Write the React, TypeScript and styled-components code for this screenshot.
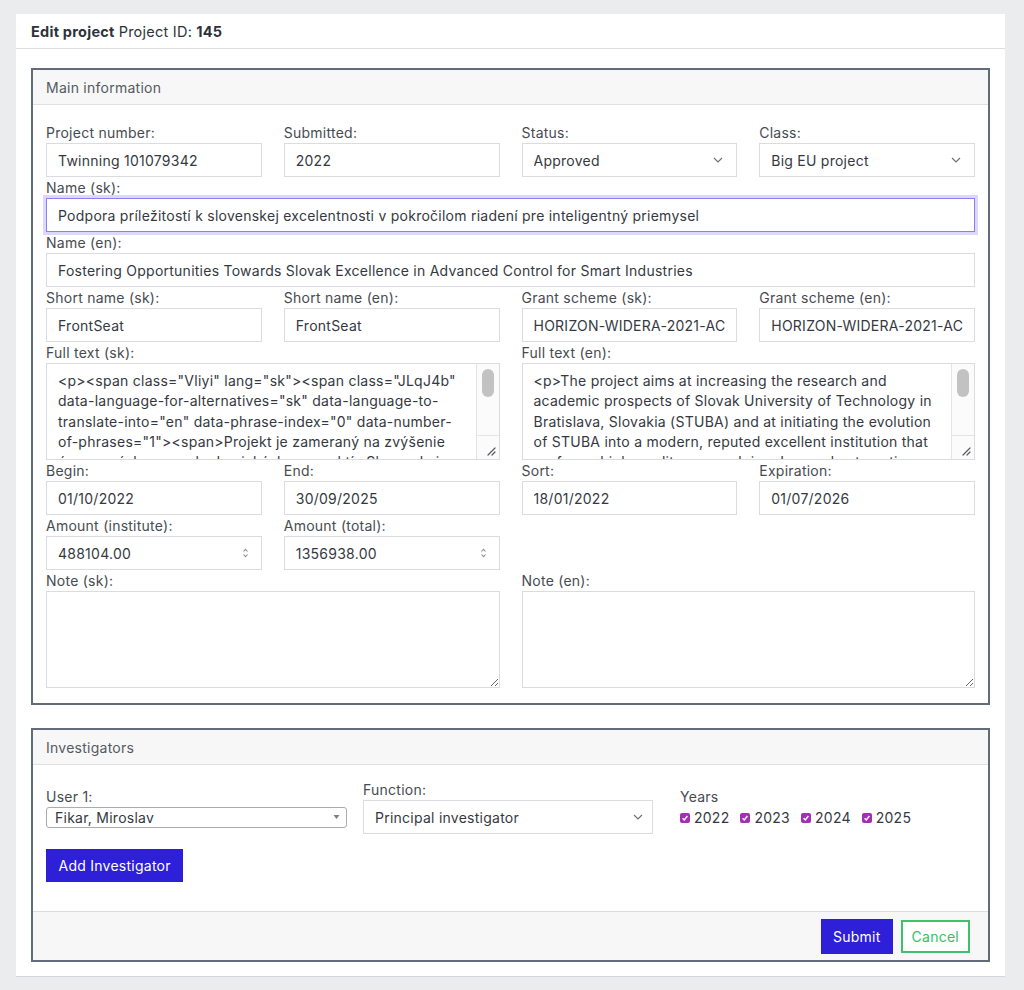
import React from "react";
import styled, { createGlobalStyle } from "styled-components";

const GlobalStyle = createGlobalStyle`
  * { box-sizing: border-box; }
  html, body {
    margin: 0;
    padding: 0;
    background: #ebecee;
    font-family: "Inter", "Liberation Sans", sans-serif;
    font-size: 14px;
    letter-spacing: 0.25px;
    color: #3b3f45;
  }
  input, select, textarea, button { letter-spacing: 0.25px; }
`;

const Page = styled.div`
  padding: 14px 19px 14px 16px;
  min-height: 990px;
`;

const Card = styled.div`
  background: #fff;
  border-bottom: 1px solid #d3d6db;
`;

const CardHeader = styled.div`
  height: 35px;
  display: flex;
  align-items: center;
  gap: 4px;
  padding: 0 15px;
  border-bottom: 1px solid #dcdee2;
  color: #2d333a;
  font-size: 14.5px;
  letter-spacing: 0.25px;
  b { font-weight: 700; }
`;

const CardBody = styled.div`
  padding: 19px 15px 14px 15px;
  display: flex;
  flex-direction: column;
  gap: 23px;
`;

const Panel = styled.section`
  border: 2px solid #626b7a;
  background: #fff;
`;

const PanelHeader = styled.div`
  height: 35px;
  display: flex;
  align-items: center;
  padding: 0 13px;
  background: #f7f7f7;
  border-bottom: 1px solid #dfe0e3;
  color: #555a61;
  font-size: 14px;
`;

const FormGrid = styled.div`
  display: grid;
  grid-template-columns: repeat(4, 1fr);
  column-gap: 22px;
  padding: 17px 13px 15px 13px;
`;

const Field = styled.div<{ $span?: number; $start?: number }>`
  display: flex;
  flex-direction: column;
  min-width: 0;
  grid-column: ${(p) => (p.$start ? `${p.$start} / ` : "")}span ${(p) => p.$span ?? 1};
`;

const Label = styled.label`
  display: block;
  line-height: 21px;
  height: 21px;
  color: #474b51;
  font-size: 14px;
`;

const Input = styled.input<{ $focused?: boolean }>`
  width: 100%;
  height: 34px;
  padding: 0 11px;
  border: 1px solid ${(p) => (p.$focused ? "#8c7ff0" : "#dadce2")};
  box-shadow: ${(p) => (p.$focused ? "0 0 0 3px #dcd7fb" : "none")};
  font-family: inherit;
  font-size: 14px;
  color: #35393f;
  background: #fff;
  outline: none;
`;

const InputWrap = styled.div`
  position: relative;
`;

const SelectBox = styled.select`
  width: 100%;
  height: 34px;
  padding: 0 30px 0 11px;
  border: 1px solid #dadce2;
  appearance: none;
  background: #fff;
  font-family: inherit;
  font-size: 14px;
  color: #35393f;
  outline: none;
`;

const Overlay = styled.span<{ $right: number }>`
  position: absolute;
  right: ${(p) => p.$right}px;
  top: 50%;
  transform: translateY(-50%);
  display: flex;
  pointer-events: none;
`;

const TextArea = styled.textarea<{ $scroll?: boolean }>`
  display: block;
  width: 100%;
  height: 97px;
  padding: 7px ${(p) => (p.$scroll ? "34px" : "11px")} 7px 11px;
  border: 1px solid #dadce2;
  font-family: inherit;
  font-size: 14px;
  line-height: 20.3px;
  color: #35393f;
  outline: none;
  resize: both;
  overflow: hidden;
`;

/* fake classic scrollbar drawn over the right edge of a scrolled textarea */
const ScrollBar = styled.div`
  position: absolute;
  top: 1px;
  right: 1px;
  bottom: 1px;
  width: 23px;
  display: flex;
  flex-direction: column;
  background: #fcfbfc;
  border-left: 1px solid #e4e4e6;
  pointer-events: none;
`;

const Track = styled.div`
  flex: 1;
  padding: 5px 5px 0 5px;
`;

const Thumb = styled.div`
  height: 28px;
  border-radius: 6px;
  background: #c2c2c2;
`;

const Corner = styled.div`
  height: 24px;
  border-top: 1px solid #e4e4e6;
  display: flex;
  align-items: flex-end;
  justify-content: flex-end;
  padding: 0 3px 3px 0;
`;

const InvBody = styled.div`
  padding: 14px 13px 29px 13px;
`;

const InvRow = styled.div`
  display: flex;
  align-items: center;
  margin-bottom: 15px;
`;

const InvField = styled.div<{ $width: number; $gap: number }>`
  width: ${(p) => p.$width}px;
  margin-right: ${(p) => p.$gap}px;
  display: flex;
  flex-direction: column;
`;

const MacSelect = styled.select`
  width: 100%;
  height: 21px;
  padding: 0 22px 0 8px;
  border: 1px solid #a9abae;
  border-radius: 3px;
  appearance: none;
  background: #fff;
  font-family: inherit;
  font-size: 14px;
  color: #35393f;
  outline: none;
`;

const Years = styled.div`
  display: flex;
  flex-direction: column;
`;

const YearsLabel = styled.div`
  line-height: 21px;
  color: #474b51;
`;

const CheckList = styled.div`
  display: flex;
  gap: 11px;
  height: 21px;
  align-items: center;
`;

const CheckItem = styled.label`
  display: flex;
  align-items: center;
  gap: 4px;
  color: #35393f;
`;

const CheckBox = styled.span`
  width: 10px;
  height: 10px;
  border-radius: 2px;
  background: #a22fb4;
  display: inline-flex;
  align-items: center;
  justify-content: center;
  margin-top: 1px;
`;

const Button = styled.button<{ $variant?: "primary" | "outline" }>`
  height: ${(p) => (p.$variant === "outline" ? "33px" : "35px")};
  padding: 0 ${(p) => (p.$variant === "outline" ? "9px" : "11px")};
  border: ${(p) => (p.$variant === "outline" ? "2px solid #3fc06c" : "1px solid #2c1fd3")};
  background: ${(p) => (p.$variant === "outline" ? "#fff" : "#2e1fd8")};
  color: ${(p) => (p.$variant === "outline" ? "#3bbd68" : "#fff")};
  font-family: inherit;
  font-size: 14px;
  cursor: pointer;
`;

const AddButton = styled(Button)`
  height: 33px;
  padding: 0 11.5px;
`;

const Footer = styled.div`
  height: 49px;
  display: flex;
  align-items: center;
  justify-content: flex-end;
  gap: 8px;
  padding: 0 18px 0 0;
  border-top: 1px solid #dcdde0;
  background: #f7f7f7;
`;

const Chevron = () => (
  <svg width="10" height="6" viewBox="0 0 10 6" fill="none">
    <path d="M1 1l4 4 4-4" stroke="#6b6f75" strokeWidth="1.1" />
  </svg>
);

const Spinner = () => (
  <svg width="7" height="11" viewBox="0 0 7 11" fill="none">
    <path d="M1.5 4L3.5 1.8 5.5 4M1.5 7l2 2.2 2-2.2" stroke="#8d9096" strokeWidth="1.1" />
  </svg>
);

const Triangle = () => (
  <svg width="7" height="5" viewBox="0 0 7 5">
    <path d="M0.5 0.5h6L3.5 4.5z" fill="#7d8086" />
  </svg>
);

const Check = () => (
  <svg width="8" height="8" viewBox="0 0 8 8" fill="none">
    <path d="M1.6 4.2l1.7 1.7L6.4 2" stroke="#fff" strokeWidth="1.4" />
  </svg>
);

const Grip = () => (
  <svg width="10" height="10" viewBox="0 0 10 10" fill="none">
    <path d="M9 2L2 9M9 6L6 9" stroke="#55595f" strokeWidth="1.2" strokeLinecap="round" />
  </svg>
);

const fullSk =
  '<p><span class="Vliyi" lang="sk"><span class="JLqJ4b" data-language-for-alternatives="sk" data-language-to-translate-into="en" data-phrase-index="0" data-number-of-phrases="1"><span>Projekt je zameraný na zvýšenie úrovne výskumu a akademických perspektív Slovenskej technickej univerzity v Bratislave (STU) a na naštartovanie jej premeny na modernú, uznávanú excelentnú inštitúciu.</span></span></span></p>';

const fullEn =
  "<p>The project aims at increasing the research and academic prospects of Slovak University of Technology in Bratislava, Slovakia (STUBA) and at initiating the evolution of STUBA into a modern, reputed excellent institution that performs high-quality research in advanced automatic control for smart industries.</p>";

const TextField = ({ label, value, span, focused }: { label: string; value: string; span?: number; focused?: boolean }) => (
  <Field $span={span}>
    <Label>{label}</Label>
    <Input $focused={focused} defaultValue={value} />
  </Field>
);

const SelectField = ({ label, value }: { label: string; value: string }) => (
  <Field>
    <Label>{label}</Label>
    <InputWrap>
      <SelectBox defaultValue={value}>
        <option>{value}</option>
      </SelectBox>
      <Overlay $right={14}>
        <Chevron />
      </Overlay>
    </InputWrap>
  </Field>
);

const NumberField = ({ label, value }: { label: string; value: string }) => (
  <Field>
    <Label>{label}</Label>
    <InputWrap>
      <Input defaultValue={value} />
      <Overlay $right={13}>
        <Spinner />
      </Overlay>
    </InputWrap>
  </Field>
);

const ScrollText = ({ label, value }: { label: string; value: string }) => (
  <Field $span={2}>
    <Label>{label}</Label>
    <InputWrap>
      <TextArea $scroll defaultValue={value} />
      <ScrollBar>
        <Track>
          <Thumb />
        </Track>
        <Corner>
          <Grip />
        </Corner>
      </ScrollBar>
    </InputWrap>
  </Field>
);

export default function App() {
  return (
    <>
      <GlobalStyle />
      <Page>
        <Card>
          <CardHeader>
            <b>Edit project</b>
            <span>Project ID:</span>
            <b>145</b>
          </CardHeader>
          <CardBody>
            <Panel>
              <PanelHeader>Main information</PanelHeader>
              <FormGrid>
                <TextField label="Project number:" value="Twinning 101079342" />
                <TextField label="Submitted:" value="2022" />
                <SelectField label="Status:" value="Approved" />
                <SelectField label="Class:" value="Big EU project" />

                <TextField
                  label="Name (sk):"
                  span={4}
                  focused
                  value="Podpora príležitostí k slovenskej excelentnosti v pokročilom riadení pre inteligentný priemysel"
                />
                <TextField
                  label="Name (en):"
                  span={4}
                  value="Fostering Opportunities Towards Slovak Excellence in Advanced Control for Smart Industries"
                />

                <TextField label="Short name (sk):" value="FrontSeat" />
                <TextField label="Short name (en):" value="FrontSeat" />
                <TextField label="Grant scheme (sk):" value="HORIZON-WIDERA-2021-ACCESS-03" />
                <TextField label="Grant scheme (en):" value="HORIZON-WIDERA-2021-ACCESS-03" />

                <ScrollText label="Full text (sk):" value={fullSk} />
                <ScrollText label="Full text (en):" value={fullEn} />

                <TextField label="Begin:" value="01/10/2022" />
                <TextField label="End:" value="30/09/2025" />
                <TextField label="Sort:" value="18/01/2022" />
                <TextField label="Expiration:" value="01/07/2026" />

                <NumberField label="Amount (institute):" value="488104.00" />
                <NumberField label="Amount (total):" value="1356938.00" />

                <Field $span={2} $start={1}>
                  <Label>Note (sk):</Label>
                  <TextArea />
                </Field>
                <Field $span={2}>
                  <Label>Note (en):</Label>
                  <TextArea />
                </Field>
              </FormGrid>
            </Panel>

            <Panel>
              <PanelHeader>Investigators</PanelHeader>
              <InvBody>
                <InvRow>
                  <InvField $width={301} $gap={16}>
                    <Label>User 1:</Label>
                    <InputWrap>
                      <MacSelect defaultValue="Fikar, Miroslav">
                        <option>Fikar, Miroslav</option>
                      </MacSelect>
                      <Overlay $right={7}>
                        <Triangle />
                      </Overlay>
                    </InputWrap>
                  </InvField>
                  <InvField $width={290} $gap={27}>
                    <Label>Function:</Label>
                    <InputWrap>
                      <SelectBox defaultValue="Principal investigator">
                        <option>Principal investigator</option>
                      </SelectBox>
                      <Overlay $right={10}>
                        <Chevron />
                      </Overlay>
                    </InputWrap>
                  </InvField>
                  <Years>
                    <YearsLabel>Years</YearsLabel>
                    <CheckList>
                      {["2022", "2023", "2024", "2025"].map((y) => (
                        <CheckItem key={y}>
                          <CheckBox>
                            <Check />
                          </CheckBox>
                          {y}
                        </CheckItem>
                      ))}
                    </CheckList>
                  </Years>
                </InvRow>
                <AddButton>Add Investigator</AddButton>
              </InvBody>
              <Footer>
                <Button>Submit</Button>
                <Button $variant="outline">Cancel</Button>
              </Footer>
            </Panel>
          </CardBody>
        </Card>
      </Page>
    </>
  );
}
